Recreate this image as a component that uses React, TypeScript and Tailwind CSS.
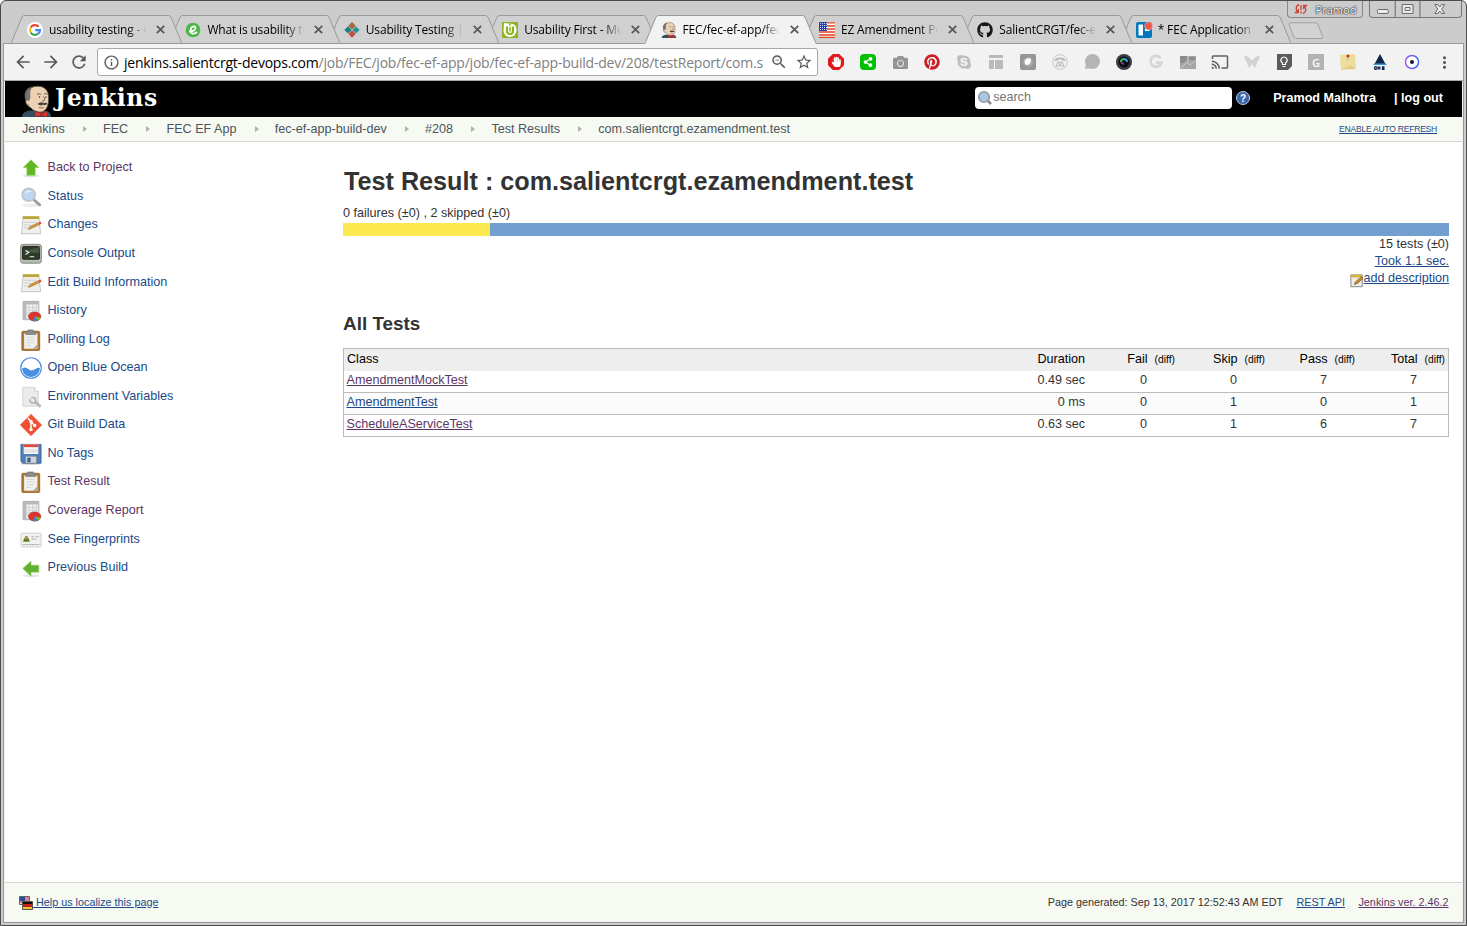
import React from "react";
import { FaGithub, FaPinterest, FaSkype, FaCamera, FaShareAlt, FaHandPaper } from "react-icons/fa";
import { MdCast, MdArrowBack, MdArrowForward, MdRefresh, MdStarBorder, MdMoreVert, MdZoomOut, MdInfoOutline } from "react-icons/md";

const Butler = ({ className }: { className: string }) => (
  <svg className={className} viewBox="0 0 29 32">
    <path d="M0 32c0-4 3-5.500 7-6.500h14c5 .5 8 2 8 6.500z" fill="#335061" />
    <path d="M4.500 14C2.500 6 8 1.200 15.500 1.200S27 6 26.500 13c.2 6-1 11-5.500 13.500-4 1.500-9 0-12-3.500C6.500 21.500 4 19 3.500 16.500z" fill="#ecd2b2" stroke="#5a4a40" strokeWidth=".8" />
    <path d="M3.500 15C1.500 8 4 3 10 1.800 7.500 5 7.500 8 8 12.500L6.500 16l-1-2z" fill="#77736f" stroke="#444" strokeWidth=".5" />
    <path d="M5 15.500q-2 1-.5 3.500 1 1.500 2.500 1" fill="#ecd2b2" stroke="#5a4a40" strokeWidth=".7" />
    <path d="M15 9.500q2-1.500 4 0M22 9q2-1 3.500 .3M21.500 11.500q2.500 3 .5 4.500h-2" stroke="#54443c" strokeWidth=".8" fill="none" />
    <circle cx="17.500" cy="12" r=".7" fill="#222" />
    <circle cx="24" cy="12" r=".7" fill="#222" />
    <path d="M15.500 19q3-3 6-1 3-1 4 1-3 2-4.500 .5-2 2-5.500-.5z" fill="#4a423f" />
    <path d="M17 22.500q3 1 5 0" stroke="#7d4a3c" strokeWidth=".8" fill="none" />
    <path d="M13 26l6.500 2.500 6-2.500v6l-6-1.500L13 32z" fill="#d33833" stroke="#7a1c1a" strokeWidth=".5" />
    <path d="M18 27.500h3v4h-3z" fill="#a82623" />
  </svg>
);

const Google = () => (
  <svg className="size-4" viewBox="0 0 16 16">
    <circle cx="8" cy="8" r="8" fill="#fff" />
    <g fill="none" strokeWidth="2.200">
      <path d="M11.600 4.700A5 5 0 0 0 3.700 5.500" stroke="#ea4335" />
      <path d="M3.700 5.500a5 5 0 0 0 0 5" stroke="#fbbc05" />
      <path d="M3.700 10.500a5 5 0 0 0 7.500 1.200" stroke="#34a853" />
      <path d="M11.200 11.700A4.800 4.800 0 0 0 13 8.200H8.200" stroke="#4285f4" />
    </g>
  </svg>
);
const GreenE = () => (
  <svg className="size-4" viewBox="0 0 16 16">
    <circle cx="8" cy="8" r="7.300" fill="#4cb848" />
    <path d="M4 9.500c4 0 7-1.500 6.500-4C10 3.200 5.800 4.500 5.600 8c-.2 4.500 4 4.500 6.400 1.800" fill="none" stroke="#fff" strokeWidth="1.800" />
  </svg>
);
const Diamonds = () => (
  <svg className="size-4" viewBox="0 0 16 16">
    <path d="M8 0l3.700 3.700L8 7.400 4.300 3.700z" fill="#a8683a" />
    <path d="M4 4.200l3.700 3.700L4 11.600.3 7.900z" fill="#1b7f83" />
    <path d="M12 4.200l3.700 3.700-3.700 3.700-3.700-3.700z" fill="#2a9396" />
    <path d="M8 8.300l3.700 3.700L8 15.700 4.300 12z" fill="#c44c42" />
  </svg>
);
const UFirst = () => (
  <svg className="size-4" viewBox="0 0 16 16">
    <path d="M0 0h16v16H0z" fill="#8db521" />
    <path d="M2 1l9 1q4 2 3.500 7-1 5.500-6.500 6-6-.5-6.500-6z" fill="#fff" />
    <path d="M5 4.500V9c0 4 6 4 6 0V4.500" fill="none" stroke="#8db521" strokeWidth="2.200" />
    <path d="M7.200 2h1.600v1.800H7.200zM7.200 5h1.600v4.500H7.200z" fill="#8db521" />
  </svg>
);
const Flag = () => (
  <svg className="size-4" viewBox="0 0 16 16">
    <path d="M0 0h16v16H0z" fill="#fff" />
    <path d="M0 .8h16M0 4h16M0 7h16M0 10h16M0 13h16M0 15.500h16" stroke="#e0401f" strokeWidth="1.300" />
    <path d="M0 0h8v9H0z" fill="#2440a8" />
    <path d="M1 1.500h7M1 3.500h7M1 5.500h7M1 7.500h7" stroke="#fff" strokeWidth=".8" strokeDasharray="1 1" />
  </svg>
);
const Trello = () => (
  <svg className="size-4 overflow-visible" viewBox="0 0 16 16">
    <rect width="16" height="16" rx="2" fill="#0079bf" />
    <rect x="2.500" y="2.500" width="4.500" height="11" rx=".6" fill="#fff" />
    <rect x="9" y="2.500" width="4.500" height="6.500" rx=".6" fill="#fff" />
    <circle cx="12.500" cy="4" r="4" fill="#eb5a46" stroke="#d0d0d0" strokeWidth=".5" />
  </svg>
);

const tabs: { icon: React.ReactNode; title: string; active?: boolean }[] = [
  { icon: <Google />, title: "usability testing - G" },
  { icon: <GreenE />, title: "What is usability te" },
  { icon: <Diamonds />, title: "Usability Testing | U" },
  { icon: <UFirst />, title: "Usability First - Me" },
  { icon: <Butler className="size-4" />, title: "FEC/fec-ef-app/fec", active: true },
  { icon: <Flag />, title: "EZ Amendment Po" },
  { icon: <FaGithub className="size-4 text-[#191717]" />, title: "SalientCRGT/fec-ef" },
  { icon: <Trello />, title: "* FEC Application B" },
];
const stack = ["z-[8]", "z-[7]", "z-[6]", "z-[5]", "z-[20]", "z-[4]", "z-[3]", "z-[2]"];

const Tab = ({ index }: { index: number }) => {
  const t = tabs[index];
  return (
    <div className={`relative flex h-[29px] w-[158.400px] shrink-0 items-center pl-4 ${stack[index]}`}>
      <svg className="absolute top-0 left-0 h-[29px] w-[172px]" viewBox="0 0 172 29">
        <path d="M0 28.500L11 2Q12 .5 14 .5H157Q159 .5 160 2L171 28.500" fill={t.active ? "#f2f2f2" : "#d0d0d0"} stroke="#999" />
        <path d="M.5 28.500h170" stroke={t.active ? "#f2f2f2" : "#999"} />
      </svg>
      <span className="relative flex size-4 shrink-0">{t.icon}</span>
      <span className="relative ml-1.5 w-[99px] whitespace-nowrap [mask-image:linear-gradient(to_right,#000_80%,transparent_98%)] font-['Open_Sans','Noto_Sans',sans-serif] text-[12px] tracking-[-0.17px] text-black">
        {t.title}
      </span>
      <svg className="relative ml-2 size-[9px]" viewBox="0 0 9 9">
        <path d="M.8 .8l7.400 7.400M8.200 .8L.8 8.200" stroke="#5a5a5a" strokeWidth="1.800" />
      </svg>
    </div>
  );
};

const extensions: React.ReactNode[] = [
  <svg className="size-4" viewBox="0 0 16 16"><path d="M4.800 0h6.400L16 4.800v6.400L11.200 16H4.800L0 11.200V4.800z" fill="#e2191c" /><g transform="translate(3 2.500)" color="#fff"><FaHandPaper size={10.500} /></g></svg>,
  <span className="flex size-4 items-center justify-center rounded-sm bg-[#00c000] text-white"><FaShareAlt size={10} /></span>,
  <FaCamera size={15} color="#949494" />,
  <FaPinterest size={16} color="#cb2027" />,
  <FaSkype size={16} color="#bdbdbd" />,
  <svg className="size-4" viewBox="0 0 16 16" fill="#bababa"><path d="M1 1h14v4H1zM1 6h5v9H1zM7 6h8v9H7z" /><path d="M1 4.500h14M6.500 5v10" stroke="#f2f2f2" /></svg>,
  <svg className="size-4" viewBox="0 0 16 16"><rect width="16" height="16" rx="2" fill="#969696" /><circle cx="8" cy="8" r="5" fill="#a8a8a8" /><path d="M5 6c2-2 5-2 6-1 0 3-1 6-4 6-2 0-3-3-2-5z" fill="#fff" /></svg>,
  <svg className="size-4" viewBox="0 0 16 16" fill="none" stroke="#b5b5b5"><circle cx="8" cy="8" r="7.300" stroke="#c4c4c4" /><path d="M3.500 7c0-3.500 9-3.500 9 0" strokeWidth="1.800" /><path d="M6 6.500v1.500l-2 4h8l-2-4V6.500" /><circle cx="8" cy="9.500" r="1.200" /></svg>,
  <svg className="size-4" viewBox="0 0 16 16" fill="#b4b4b4"><circle cx="8.500" cy="7.500" r="7.500" /><path d="M1 15l1-5 5 4z" /></svg>,
  <svg className="size-4" viewBox="0 0 16 16"><circle cx="8" cy="8" r="8" fill="#3b3c40" /><circle cx="8" cy="8" r="5.500" fill="#0c0c14" /><path d="M5 8a3 3 0 0 1 3-3" stroke="#2fc14c" strokeWidth="2" fill="none" /><path d="M8 5a3 3 0 0 1 3 3" stroke="#33a2e8" strokeWidth="2" fill="none" /><path d="M5 8q1 2 3 2" stroke="#c23bb0" strokeWidth="1.500" fill="none" /></svg>,
  <svg className="size-4" viewBox="0 0 16 16" fill="none" stroke="#d5d5d5" strokeWidth="2.800"><path d="M12.500 4A5.500 5.500 0 1 0 13.400 8.700H8" /></svg>,
  <svg className="size-4" viewBox="0 0 16 16"><path d="M0 2h16v13H0z" fill="#a5a5a5" /><path d="M0 2h7v4l-4 3H0zM9 3h6v3H9z" fill="#8b8b8b" /><path d="M1 14l6-6 3 3 5-4M8 2v5" stroke="#ccc" fill="none" /></svg>,
  <MdCast size={18} color="#616161" />,
  <svg className="size-4" viewBox="0 0 16 16" fill="#d2d2d2"><path d="M0 2q5 0 7 4h2q2-4 7-4-1 4-3 6 0 3-2 6l-3-4-3 4q-2-3-2-6-2-2-3-6z" /></svg>,
  <svg className="size-4" viewBox="0 0 16 16"><path d="M1 0h15v12l-4 4H1z" fill="#5b5b5b" /><path d="M6.500 10.500V9c-3-2-1.500-6 1.500-6s4.500 4 1.500 6v1.500zM6.500 12.500h3" fill="none" stroke="#fff" strokeWidth="1.200" /></svg>,
  <span className="flex size-4 items-center justify-center bg-[#b2b2b2] font-['Open_Sans',sans-serif] text-[11px] font-semibold text-white">G</span>,
  <svg className="size-4" viewBox="0 0 16 16"><path d="M0 1l15-1 1 15-15 1z" fill="#ecdd9c" /><path d="M12 12l3 3H1z" fill="#dccb86" /><circle cx="8" cy="2" r="1.500" fill="#d52b1e" /><path d="M8 3l-1 3" stroke="#999" strokeWidth=".7" /></svg>,
  <svg className="size-4" viewBox="0 0 16 16"><path d="M8 0l6 11H2z" fill="#12264a" /><path d="M2 9.500h12l.7 1.500H1.300z" fill="#2f9bd8" /><g fill="none" stroke="#12264a" strokeWidth="1.300"><circle cx="3.800" cy="14" r="1.300" /><path d="M6 12.600l2.300 2.800M8.300 12.600L6 15.400M12.500 12.800h-2v2.500h2M10.500 14h2" /></g></svg>,
  <svg className="size-4" viewBox="0 0 16 16"><defs><linearGradient id="ring"><stop stopColor="#a55bf0" /><stop offset="1" stopColor="#3d6df2" /></linearGradient></defs><circle cx="8" cy="8" r="6.500" fill="#fff" stroke="url(#ring)" strokeWidth="1.500" /><circle cx="8" cy="8" r="2" fill="#14143c" /></svg>,
  <MdMoreVert size={19} color="#555" />,
];

const UpArrow = () => (
  <svg className="size-[22px]" viewBox="0 0 24 24"><ellipse cx="12" cy="20.500" rx="9" ry="1.800" fill="#e4e4e4" /><path d="M12 3l8.500 8.500H16.500V20h-9v-8.500H3.500z" fill="#5fb81f" stroke="#8fd45c" strokeWidth=".8" /></svg>
);
const Magnifier = () => (
  <svg className="size-[22px]" viewBox="0 0 24 24"><ellipse cx="12" cy="21" rx="10" ry="2" fill="#ededed" /><path d="M15 15l6.500 5.500" stroke="#9b9b9b" strokeWidth="3.200" strokeLinecap="round" /><circle cx="9.500" cy="9.500" r="7" fill="#bcd6f5" stroke="#c2c5c8" strokeWidth="2" /><path d="M5 9c1-4 5-5 8-3-2 0-6 1-8 3z" fill="#e6f1fd" /></svg>
);
const Notepad = () => (
  <svg className="size-[22px]" viewBox="0 0 24 24"><path d="M3.500 3h17l2 18.500H1.500z" fill="#efefec" stroke="#b5b5b5" strokeWidth=".8" /><path d="M3 2.500h18v3H3z" fill="#bda63a" /><path d="M4 9h14M4 12h8M4 15h6" stroke="#ccc" /><path d="M9 17l2-3.500 9-4 1.500 2-8.500 4z" fill="#d79a35" stroke="#8a5f1c" strokeWidth=".5" /><path d="M20 9.300l2.500-1 1 2.200-2 1z" fill="#e2463a" /></svg>
);
const Terminal = () => (
  <svg className="size-[22px]" viewBox="0 0 24 24"><rect x=".7" y="1.500" width="22.600" height="20.500" rx="2.500" fill="#b9bdb5" stroke="#71756c" strokeWidth=".9" /><rect x="2.800" y="3.800" width="18.400" height="14" rx="1" fill="#2d3b28" stroke="#1b2318" /><path d="M3 10l18-6v7z" fill="#5a6b50" opacity=".6" /><path d="M6 8l3.500 2.300L6 12.500M10.500 15h5" stroke="#e6efe0" strokeWidth="1.300" fill="none" /></svg>
);
const Chart = () => (
  <svg className="size-[22px]" viewBox="0 0 24 24"><path d="M3.500 1.500h17v20h-17z" fill="#f4f4f3" stroke="#a5a5a5" /><path d="M3 2h4v19H3zM3 2h17v3H3z" fill="#b9b9b9" /><path d="M7 8h13M7 11h13M7 14h13M7 17h13M10 5v16M14 5v16M17.500 5v16" stroke="#c4c4c4" strokeWidth=".8" /><ellipse cx="16" cy="18" rx="6.800" ry="5" fill="#da3631" stroke="#a72421" strokeWidth=".6" /><path d="M16 18l4 4.300c-2 1-5 1-6 .5z" fill="#4a80c8" /><path d="M16 18l6.500 1c-.5 2-1.500 2.500-2.500 3.300z" fill="#79b441" /></svg>
);
const Clipboard = () => (
  <svg className="size-[22px]" viewBox="0 0 24 24"><rect x="2" y="2.500" width="19.500" height="21" rx="1.300" fill="#b27a35" stroke="#8a5a20" strokeWidth=".8" /><path d="M4.500 5h14.500v16.500H4.500z" fill="#f1f1f0" /><path d="M7 9h9M7 12h9M7 15h8M7 18h5" stroke="#d2d2d2" /><path d="M19 16.500v5h-5z" fill="#aaa" /><path d="M8.500 1h6v1.500H17V6H6.500V2.500h2z" fill="#8b8d88" stroke="#666" strokeWidth=".6" /></svg>
);
const Ocean = () => (
  <svg className="size-[22px]" viewBox="0 0 24 24"><circle cx="12" cy="12" r="11.200" fill="#fff" stroke="#4a90e2" strokeWidth="1.300" /><path d="M2.300 12.500c5-3.500 7 3 11.500 2 3.500-1 4.500-3.500 8-2.500C21.500 18 17 21.700 12 21.700S2.600 18 2.300 12.500z" fill="#4a90e2" /></svg>
);
const PageWrench = () => (
  <svg className="size-[22px]" viewBox="0 0 24 24"><path d="M3 1.500h13l4 4.500v16H3z" fill="#ebecea" stroke="#d3d3d1" /><path d="M16 1.500V6h4" fill="#fff" stroke="#ccc" /><path d="M15.500 16.500l7 6" stroke="#bababa" strokeWidth="3" /><circle cx="14" cy="15.500" r="3" fill="#eee" stroke="#b2b2b2" strokeWidth="1.800" /><path d="M10 12.500l4 2.500" stroke="#ebecea" strokeWidth="2" /></svg>
);
const Git = () => (
  <svg className="size-[22px]" viewBox="0 0 24 24"><path d="M12 .4L23.600 12 12 23.600.4 12z" fill="#f05033" stroke="#f05033" strokeLinejoin="round" strokeWidth=".8" /><path d="M8.500 4.500l3.500 3.500v9M12 8.500l4 4" stroke="#fff" strokeWidth="1.600" fill="none" /><g fill="#fff"><circle cx="12" cy="8.300" r="1.900" /><circle cx="12" cy="17" r="1.900" /><circle cx="16" cy="12.600" r="1.900" /></g></svg>
);
const Floppy = () => (
  <svg className="size-[22px]" viewBox="0 0 24 24"><ellipse cx="12" cy="22.500" rx="11" ry="1.300" fill="#ccc" /><path d="M1 1.500h22v20.500H3L1 20z" fill="#5080bb" stroke="#31568a" strokeWidth=".8" /><path d="M4 1.500h16V12H4z" fill="#f4f4f4" /><path d="M4 1.500h16v3H4z" fill="#e04a3d" /><path d="M4.500 7.500h15M4.500 9.500h15" stroke="#d5d5d5" /><path d="M6 14.500h12V22H6z" fill="#d1d3d6" stroke="#6b7685" strokeWidth=".5" /><path d="M8 16h3.500v5H8z" fill="#3c5a86" /></svg>
);
const IdCard = () => (
  <svg className="size-[22px]" viewBox="0 0 24 24"><rect x="1" y="4.500" width="22" height="15" rx="1" fill="#f2f3f0" stroke="#ccc" /><path d="M3.500 14c0-3 1-3 1.500-4 0-3 4-3 4 0 .5 1 1.500 1 1.500 4z" fill="#64801f" /><circle cx="7" cy="9.500" r="1.600" fill="#c58c5a" /><path d="M12.500 8.500h3M17 8.500h4M12.500 11h5M3 17h18" stroke="#9c9c9c" strokeDasharray="2.500 .7" /></svg>
);
const LeftArrow = () => (
  <svg className="size-[22px]" viewBox="0 0 24 24"><ellipse cx="12" cy="20.500" rx="9" ry="1.500" fill="#e6e6e6" /><path d="M3 12.500l9-8V9h8.500v7.500H12V21z" fill="#5fb32d" stroke="#92cc6e" strokeWidth=".8" /></svg>
);

const tasks: [React.ReactNode, string, boolean?][] = [
  [<UpArrow />, "Back to Project", true],
  [<Magnifier />, "Status"],
  [<Notepad />, "Changes"],
  [<Terminal />, "Console Output"],
  [<Notepad />, "Edit Build Information"],
  [<Chart />, "History"],
  [<Clipboard />, "Polling Log"],
  [<Ocean />, "Open Blue Ocean"],
  [<PageWrench />, "Environment Variables"],
  [<Git />, "Git Build Data"],
  [<Floppy />, "No Tags"],
  [<Clipboard />, "Test Result", true],
  [<Chart />, "Coverage Report", true],
  [<IdCard />, "See Fingerprints"],
  [<LeftArrow />, "Previous Build"],
];

const crumbs = ["Jenkins", "FEC", "FEC EF App", "fec-ef-app-build-dev", "#208", "Test Results", "com.salientcrgt.ezamendment.test"];

const rows = [
  { name: "AmendmentMockTest", visited: true, duration: "0.49 sec", counts: [0, 0, 7, 7] },
  { name: "AmendmentTest", visited: false, duration: "0 ms", counts: [0, 1, 0, 1] },
  { name: "ScheduleAServiceTest", visited: true, duration: "0.63 sec", counts: [0, 1, 6, 7] },
];

export default function App() {
  return (
    <div className="flex h-[926px] w-[1467px] flex-col overflow-hidden rounded-t-md border border-[#4c4c4c] bg-[#cccccc] font-['Liberation_Sans',Arial,sans-serif] text-[12.600px] leading-[17px] text-[#333]">
      <header className="relative z-10 flex h-[42px] shrink-0 items-end pl-[10px]">
        <div className="-mb-px flex">{tabs.map((t, i) => <Tab key={t.title} index={i} />)}</div>
        <svg className="mb-[3px] ml-[10px] h-[18px] w-9" viewBox="0 0 36 18">
          <path d="M3 .8h24q2 0 3 1.500l4.500 12q.8 2.200-1.500 2.200H9q-2 0-3-1.500L1 2.800Q.5 .8 3 .8z" fill="#d2d2d2" stroke="#a2a2a2" />
        </svg>
        <div className="absolute top-0 right-[103px] flex h-[17px] w-[76px] items-center justify-center gap-2 rounded-b border border-t-0 border-[#888] font-['Open_Sans',sans-serif] text-[11px] text-white [text-shadow:0_0_1px_#222,0_0_1px_#222,0_0_2px_#333]">
          <svg className="h-3 w-3.5" viewBox="0 0 14 12"><path d="M5 1.500Q1.500 3 2.500 7l1.500 3M.8 9.500h3.500V6M9 10.500q3.500-1.500 2.500-5.500L10 2M13.200 2.500H9.700V6M7 2v5M7 8.500v2" fill="none" stroke="#cf4434" strokeWidth="1.400" /></svg>
          Pramod
        </div>
        <div className="absolute top-0 right-[4px] flex h-[17px] w-[93px] rounded-b border border-t-0 border-[#777]">
          <svg className="h-4 w-[92px]" viewBox="0 0 92 16" fill="#eee" stroke="#666">
            <path d="M25.500 0v16M50.500 0v16" />
            <rect x="7.500" y="8.500" width="11" height="4" rx="1" />
            <path d="M32.500 3.500h11v9h-11zM35.500 6.500h5v3h-5z" />
            <path d="M65.500 3.500h3l2 2.500 2-2.500h3L72.500 8l3 4.500h-3l-2-2.500-2 2.500h-3l3-4.500z" />
          </svg>
        </div>
      </header>

      <div className="mx-[2px] mb-[2px] flex grow flex-col border border-[#999] bg-[#f2f2f2] pb-px">
        <div className="flex h-[37px] shrink-0 items-center border-b border-[#a9a9a9] pl-[9px] text-[#5a5a5a]">
          <MdArrowBack size={20} />
          <MdArrowForward size={20} className="ml-2" />
          <MdRefresh size={20} className="ml-2" />
          <div className="ml-[8px] flex h-7 w-[721px] items-center rounded-[3px] border border-[#a8a8a8] bg-white pl-[5px]">
            <MdInfoOutline size={17} />
            <div className="ml-1 w-[640px] font-['Open_Sans','Noto_Sans',sans-serif] text-[14px] tracking-[-0.220px] whitespace-nowrap text-[#808080]">
              <span className="text-black">jenkins.salientcrgt-devops.com</span>/job/FEC/job/fec-ef-app/job/fec-ef-app-build-dev/208/testReport/com.s
            </div>
            <MdZoomOut size={18} className="ml-1.5 shrink-0" />
            <MdStarBorder size={18} className="ml-[7px] shrink-0" />
          </div>
          <div className="ml-[2px] flex">
            {extensions.map((icon, i) => <span key={i} className="flex w-8 items-center justify-center">{icon}</span>)}
          </div>
        </div>

        <main className="mx-px flex grow flex-col bg-white">
          <div className="flex h-9 shrink-0 items-center bg-black pr-[19px] pl-[17px] font-bold text-white">
            <Butler className="mt-1 h-8 w-[29px]" />
            <span className="mb-0.5 ml-1 font-['DejaVu_Serif',serif] text-[23.500px] leading-9 tracking-[0.60px]">Jenkins</span>
            <div className="mb-[3px] ml-auto flex h-[22px] w-[257px] items-center rounded bg-white pl-[2px] font-normal text-[#757575]">
              <svg className="size-4" viewBox="0 0 16 16"><path d="M10 10l4 4" stroke="#8b8b8b" strokeWidth="2.500" /><circle cx="7" cy="7" r="5.300" fill="#a9c6e8" stroke="#96999c" strokeWidth="1.600" /></svg>
              <span>search</span>
            </div>
            <span className="mb-[2px] ml-[4px] flex size-[14px] items-center justify-center rounded-full border border-[#b9cbe8] bg-[#3b66a8] text-[10px]">?</span>
            <span className="mb-px ml-[23px]">Pramod Malhotra</span>
            <span className="mb-px ml-[18px]">| log out</span>
          </div>
          <nav className="flex h-[25px] shrink-0 items-center border-b border-[#d3d7cf] bg-[#f6faf2] pr-[25px] pl-[17px] text-[#4d545d]">
            {crumbs.map((c, i) => (
              <React.Fragment key={c}>
                {i > 0 && <svg className="mr-[16px] ml-[18.300px] h-2 w-1" viewBox="0 0 4 8"><path d="M0 1l4 3-4 3z" fill="#b0b0b0" /></svg>}
                <span>{c}</span>
              </React.Fragment>
            ))}
            <a className="ml-auto text-[8.500px] tracking-[-0.210px] text-[#204a87] underline">ENABLE AUTO REFRESH</a>
          </nav>

          <div className="flex grow">
            <aside className="w-[338px] shrink-0 pt-[12px] pl-[15px]">
              {tasks.map(([icon, label, visited]) => (
                <a key={label} className={`flex h-[28.570px] items-center ${visited ? "text-[#5c3566]" : "text-[#204a87]"}`}>
                  {icon}
                  <span className="mb-px ml-[5.500px]">{label}</span>
                </a>
              ))}
            </aside>
            <section className="w-[1106px] pt-[23px]">
              <h1 className="ml-px text-[25.200px] leading-8 font-bold">Test Result : com.salientcrgt.ezamendment.test</h1>
              <p className="mt-[8px]">0 failures (±0) , 2 skipped (±0)</p>
              <div className="mt-[1px] flex h-[13px] bg-[#729fcf]"><div className="w-[147px] bg-[#fce94f]" /></div>
              <div className="flex flex-col items-end">
                <span>15 tests (±0)</span>
                <a className="text-[#204a87] underline">Took 1.1 sec.</a>
                <a className="flex h-[17px] items-center text-[#204a87]">
                  <svg className="mt-1 size-[14px]" viewBox="0 0 16 16"><path d="M1 1h13v13.500H1z" fill="#eee" stroke="#777" /><path d="M1 1h13v3H1z" fill="#d8b83a" /><path d="M5 12l1-3 7-6 2 2-7 6z" fill="#c98c2d" stroke="#73501b" strokeWidth=".7" /></svg>
                  <span className="underline">add description</span>
                </a>
              </div>
              <h2 className="mt-[25px] text-[18.900px] leading-6 font-bold">All Tests</h2>
              <div className="mt-[12px] border border-[#bbb]">
                <div className="flex h-[22px] items-center bg-[#eee] pb-[2px] pl-[3px] text-black">
                  <span className="grow">Class</span>
                  <span className="w-20 text-right">Duration</span>
                  {["Fail", "Skip", "Pass", "Total"].map((h, i) => (
                    <span key={h} className={`flex items-baseline justify-end pr-[3px] ${i === 0 ? "w-[93px]" : "w-[90px]"}`}>
                      {h}<span className="ml-[7px] text-[10.300px]">(diff)</span>
                    </span>
                  ))}
                </div>
                {rows.map((r, i) => (
                  <div key={r.name} className={`flex items-center pb-[2px] pl-[2.500px] ${i === 0 ? "h-[21px]" : "h-[22px] border-t border-[#bbb]"} ${i === 1 ? "bg-[#fbfbfb]" : ""}`}>
                    <a className={`underline ${r.visited ? "text-[#5c3566]" : "text-[#204a87]"}`}>{r.name}</a>
                    <span className="ml-auto w-20 text-right">{r.duration}</span>
                    {r.counts.map((n, j) => <span key={j} className={`text-right ${j === 0 ? "w-[62px]" : "w-[90px]"}`}>{n}</span>)}
                    <span className="w-[31px]" />
                  </div>
                ))}
              </div>
            </section>
          </div>

          <footer className="flex h-[39px] shrink-0 items-center border-t border-[#d3d7cf] bg-[#f6faf2] pr-[13.500px] pl-[14px] text-[10.800px]">
            <svg className="mt-0.5 size-[14px]" viewBox="0 0 14 14"><path d="M.5 .5h10v8H.5z" fill="#dedede" stroke="#666" /><path d="M1 1h5v4H1z" fill="#2a4c9b" /><path d="M6 2h4M6 4h4M1 6h9" stroke="#c33" /><path d="M3.500 5.500h10v8h-10z" fill="#111" stroke="#555" /><path d="M4 8h9v3H4z" fill="#c8201c" /><path d="M4 11h9v2H4z" fill="#f0c52a" /></svg>
            <a className="text-[#204a87] underline">&nbsp;Help us localize this page</a>
            <span className="ml-auto">Page generated: Sep 13, 2017 12:52:43 AM EDT</span>
            <a className="ml-[13.500px] text-[#204a87] underline">REST API</a>
            <a className="ml-[13.500px] text-[#5c3566] underline">Jenkins ver. 2.46.2</a>
          </footer>
        </main>
      </div>
    </div>
  );
}
